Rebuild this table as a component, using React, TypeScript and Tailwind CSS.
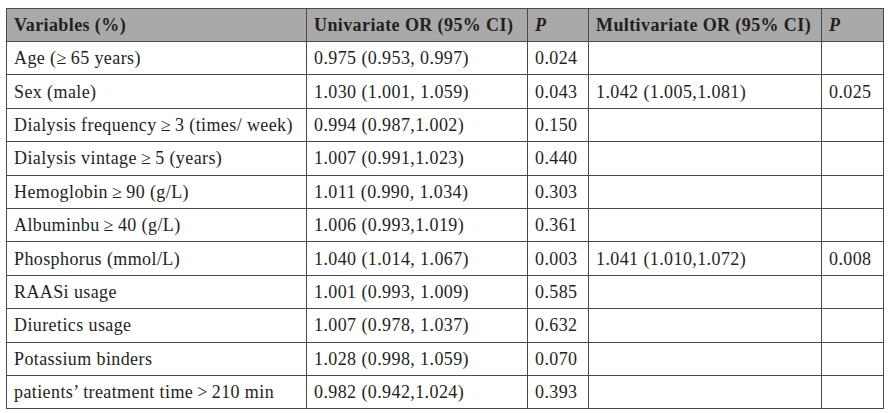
const ROWS: [string, string, string, string, string][] = [
  ['Age (≥\u200965 years)', '0.975 (0.953, 0.997)', '0.024', '', ''],
  ['Sex (male)', '1.030 (1.001, 1.059)', '0.043', '1.042 (1.005,1.081)', '0.025'],
  ['Dialysis frequency\u2009≥\u20093 (times/ week)', '0.994 (0.987,1.002)', '0.150', '', ''],
  ['Dialysis vintage\u2009≥\u20095 (years)', '1.007 (0.991,1.023)', '0.440', '', ''],
  ['Hemoglobin\u2009≥\u200990 (g/L)', '1.011 (0.990, 1.034)', '0.303', '', ''],
  ['Albuminbu\u2009≥\u200940 (g/L)', '1.006 (0.993,1.019)', '0.361', '', ''],
  ['Phosphorus (mmol/L)', '1.040 (1.014, 1.067)', '0.003', '1.041 (1.010,1.072)', '0.008'],
  ['RAASi usage', '1.001 (0.993, 1.009)', '0.585', '', ''],
  ['Diuretics usage', '1.007 (0.978, 1.037)', '0.632', '', ''],
  ['Potassium binders', '1.028 (0.998, 1.059)', '0.070', '', ''],
  ['patients’ treatment time\u2009>\u2009210 min', '0.982 (0.942,1.024)', '0.393', '', ''],
]

const cell = 'border border-[#4a4a4a] px-[7px] text-left align-middle whitespace-nowrap'

export default function App() {
  return (
    <div className="min-h-[413px] bg-white pt-2 pl-[6px]">
      <table
        className="table-fixed border-collapse text-[18px] leading-none tracking-[0.4px] text-[#231f20]"
        style={{ fontFamily: '"Liberation Serif", "Times New Roman", serif' }}
      >
        <colgroup>
          <col className="w-[300px]" />
          <col className="w-[221px]" />
          <col className="w-[61px]" />
          <col className="w-[233px]" />
          <col className="w-[62px]" />
        </colgroup>
        <thead>
          <tr className="h-[33px] bg-[#a9a9a9] font-bold">
            <th className={cell}>Variables (%)</th>
            <th className={cell}>Univariate OR (95% CI)</th>
            <th className={`${cell} italic`}>P</th>
            <th className={cell}>Multivariate OR (95% CI)</th>
            <th className={`${cell} italic`}>P</th>
          </tr>
        </thead>
        <tbody>
          {ROWS.map((r) => (
            <tr key={r[0]} className="h-[33.4px]">
              {r.map((v, i) => (
                <td key={i} className={cell}>
                  {v}
                </td>
              ))}
            </tr>
          ))}
        </tbody>
      </table>
    </div>
  )
}
